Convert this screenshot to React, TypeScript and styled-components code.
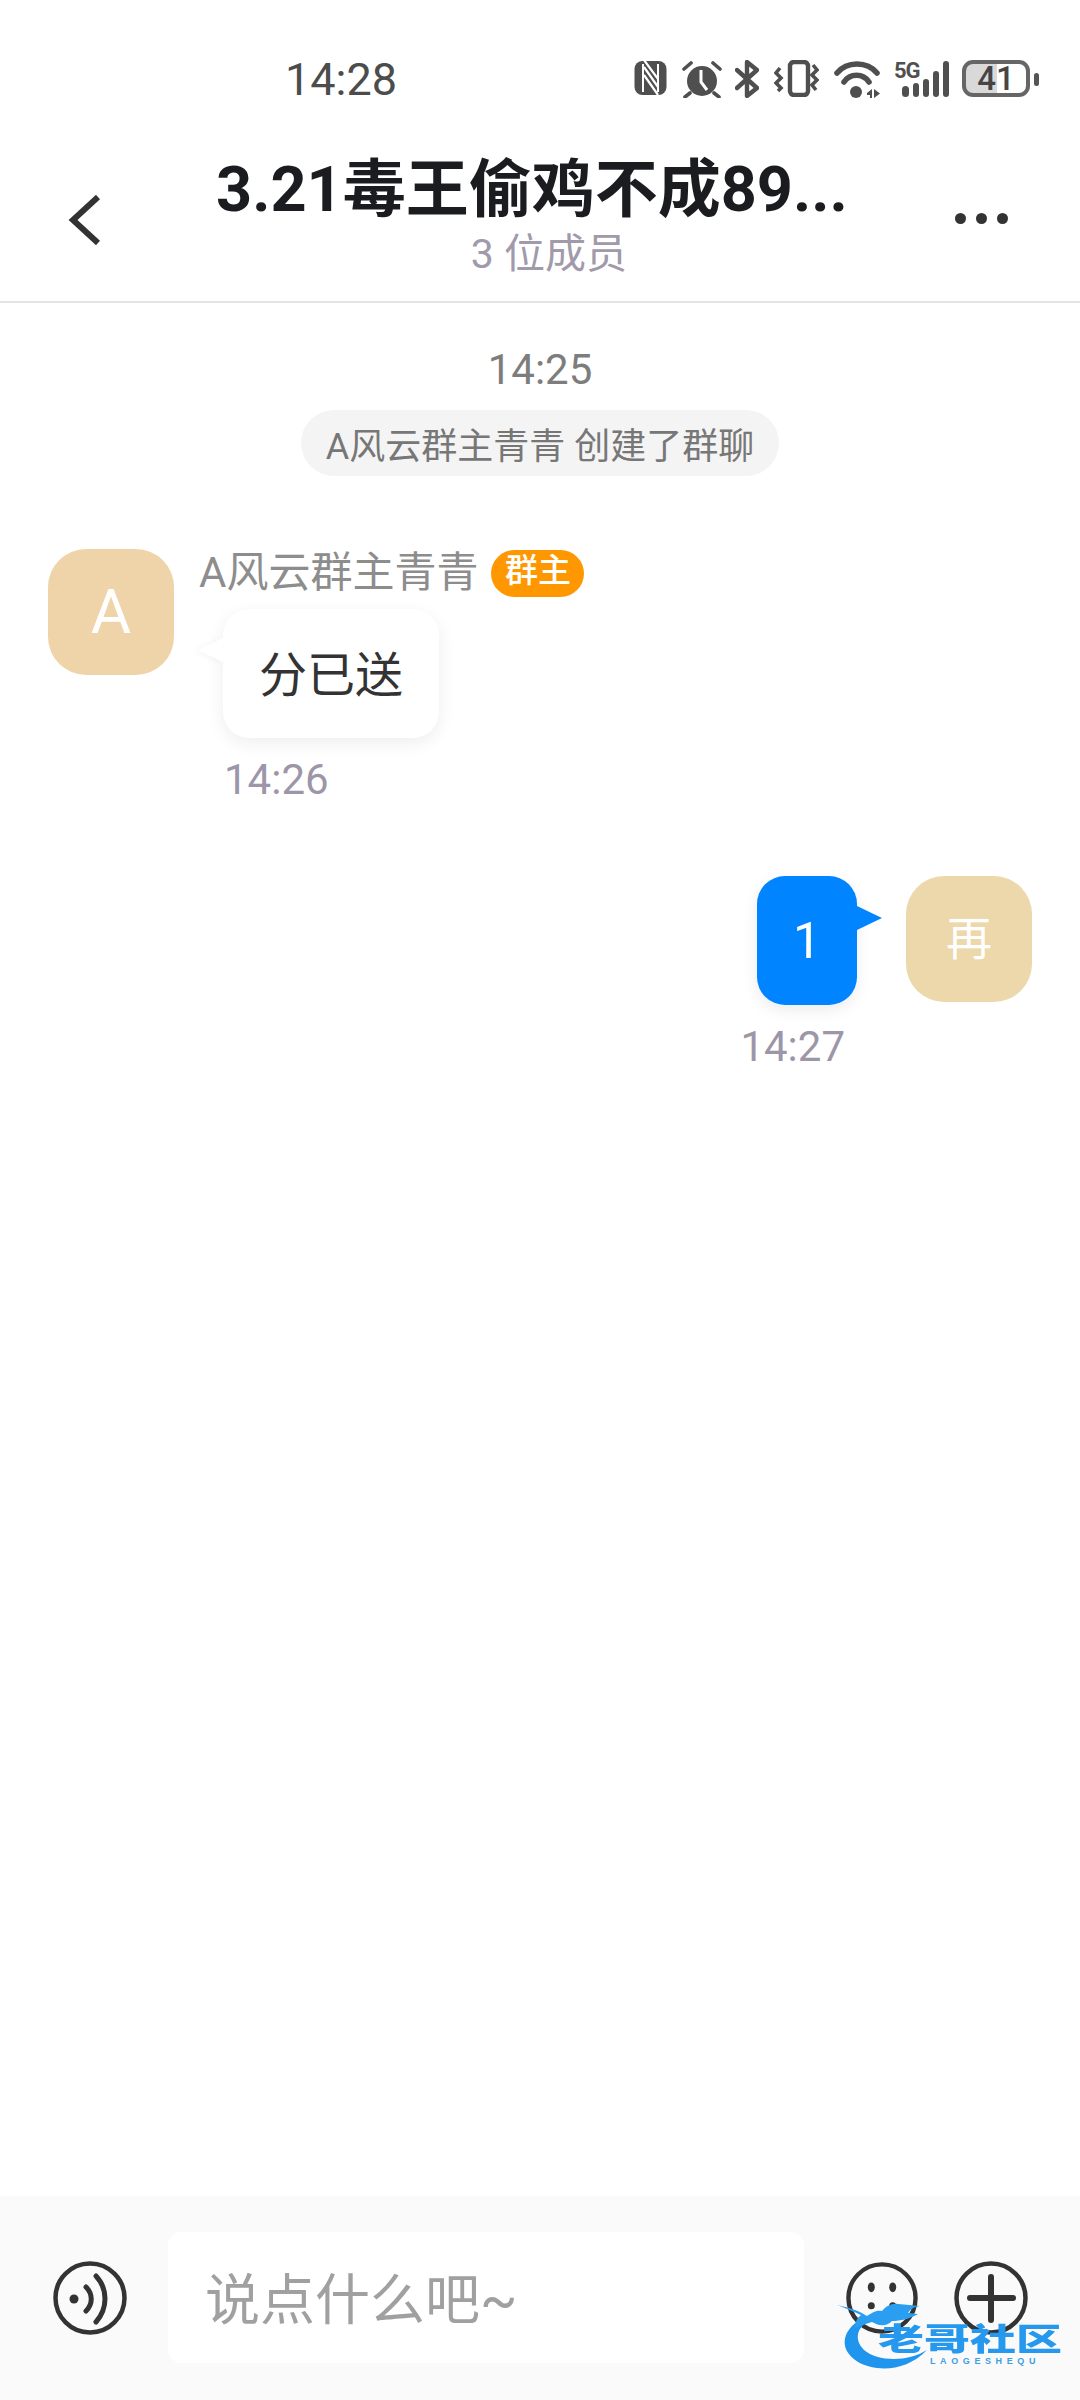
import React from "react";
import styled, { createGlobalStyle } from "styled-components";

const Global = createGlobalStyle`
  html, body { margin: 0; padding: 0; background: #fff; }
  * { box-sizing: border-box; }
  body { font-family: Roboto, "Noto Sans CJK SC", sans-serif; }
`;

const Page = styled.div`
  width: 1080px;
  height: 2400px;
  display: flex;
  flex-direction: column;
  background: #fff;
  overflow: hidden;
`;

const StatusBar = styled.div`
  height: 120px;
  padding: 56px 0 0 285px;
  display: flex;
  align-items: flex-start;
`;
const Clock = styled.div`
  width: 349px;
  font-family: Roboto, sans-serif;
  font-size: 45px;
  line-height: 48px;
  color: #4c4c4c;
`;
const StatusIcons = styled.div`
  display: flex;
  align-items: flex-start;
  height: 44px;
  padding-top: 4px;
  color: #505050;
`;
const Icon = styled.svg<{ $gap?: number }>`
  display: block;
  flex: none;
  margin-right: ${(p) => p.$gap ?? 0}px;
`;
const FiveG = styled.div`
  width: 27px;
  margin: 1px -27px 0 0;
  font-family: Roboto, sans-serif;
  font-weight: 700;
  font-size: 22px;
  line-height: 19px;
  letter-spacing: -1px;
  color: #505050;
`;
const Battery = styled.div`
  width: 68px;
  height: 37px;
  margin-left: 13px;
  border: 4px solid #666;
  border-radius: 11px;
  background: linear-gradient(90deg, #d9d9d9 0 31px, #fff 31px);
  display: flex;
  align-items: center;
  justify-content: center;
  font-family: Roboto, sans-serif;
  font-size: 33px;
  font-weight: 500;
  line-height: 29px;
  color: #454545;
`;
const BatteryNub = styled.div`
  width: 5px;
  height: 13px;
  margin: 13px 0 0 4px;
  border-radius: 2.5px;
  background: #555;
`;

const Header = styled.header`
  height: 183px;
  display: grid;
  grid-template-columns: 216px 1fr 216px;
  border-bottom: 2px solid #e3e3e3;
`;
const BackCell = styled.div`
  padding: 75px 0 0 68px;
`;
const TitleBlock = styled.div`
  display: flex;
  flex-direction: column;
  align-items: center;
  padding-top: 30px;
`;
const Title = styled.div`
  margin-right: 18px;
  font-size: 63px;
  font-weight: 700;
  line-height: 80px;
  color: #1b1c20;
  white-space: nowrap;
`;
const Members = styled.div`
  margin-left: 16px;
  font-size: 41px;
  line-height: 48px;
  color: #a09aaa;
  white-space: nowrap;
`;
const MoreCell = styled.div`
  display: flex;
  justify-content: flex-end;
  gap: 10px;
  padding: 93px 74px 0 0;
`;
const MoreDot = styled.span`
  width: 11px;
  height: 11px;
  border-radius: 50%;
  background: #333;
`;

const Chat = styled.main`
  flex: 1;
  display: flex;
  flex-direction: column;
`;
const SystemBlock = styled.div`
  display: flex;
  flex-direction: column;
  align-items: center;
  padding-top: 43px;
`;
const SystemTime = styled.div`
  font-size: 42px;
  line-height: 48px;
  color: #7d7d7d;
`;
const SystemPill = styled.div`
  margin-top: 16px;
  height: 66px;
  padding: 0 25px;
  border-radius: 33px;
  background: #f4f4f4;
  display: flex;
  align-items: center;
  font-size: 36px;
  color: #777;
  white-space: nowrap;
`;

const IncomingRow = styled.div`
  display: flex;
  padding: 73px 0 0 48px;
`;
const Avatar = styled.div<{ $bg: string; $size?: number }>`
  width: 126px;
  height: 126px;
  flex: none;
  border-radius: 38px;
  background: ${(p) => p.$bg};
  color: #fff;
  display: flex;
  align-items: center;
  justify-content: center;
  font-size: ${(p) => p.$size ?? 62}px;
  line-height: 1;
`;
const IncomingBody = styled.div`
  margin-left: 25px;
  display: flex;
  flex-direction: column;
  align-items: flex-start;
`;
const NameRow = styled.div`
  display: flex;
  align-items: center;
  height: 48px;
  gap: 13px;
`;
const Name = styled.div`
  font-size: 42px;
  line-height: 48px;
  color: #8d8d8d;
  white-space: nowrap;
`;
const OwnerBadge = styled.div`
  width: 93px;
  height: 47px;
  border-radius: 24px;
  background: #ff9800;
  color: #fff;
  font-size: 33px;
  font-weight: 500;
  line-height: 40px;
  padding-bottom: 5px;
  display: flex;
  align-items: center;
  justify-content: center;
`;
const LeftBubble = styled.div`
  position: relative;
  margin: 12px 0 0 24px;
  width: 216px;
  height: 129px;
  padding-bottom: 6px;
  border-radius: 26px;
  background: #fff;
  box-shadow: 0 5px 18px rgba(0, 0, 0, 0.07);
  display: flex;
  align-items: center;
  justify-content: center;
  font-size: 48px;
  color: #333;
  &::before {
    content: "";
    position: absolute;
    left: -25px;
    top: 29px;
    border-style: solid;
    border-width: 12px 25px 12px 0;
    border-color: transparent #fff transparent transparent;
    filter: drop-shadow(-3px 1px 3px rgba(0, 0, 0, 0.04));
  }
`;
const LeftTime = styled.div`
  margin: 18px 0 0 25px;
  font-size: 42px;
  line-height: 48px;
  color: #9d96a8;
`;

const OutgoingRow = styled.div`
  display: flex;
  justify-content: flex-end;
  align-items: flex-start;
  padding: 72px 48px 0 0;
`;
const OutgoingBody = styled.div`
  display: flex;
  flex-direction: column;
  align-items: flex-end;
  margin-right: 49px;
`;
const RightBubble = styled.div`
  position: relative;
  width: 100px;
  height: 129px;
  border-radius: 28px;
  background: #0084ff;
  box-shadow: 0 5px 16px rgba(0, 0, 0, 0.08);
  color: #fff;
  font-size: 50px;
  display: flex;
  align-items: center;
  justify-content: center;
  &::after {
    content: "";
    position: absolute;
    right: -25px;
    top: 30px;
    border-style: solid;
    border-width: 12px 0 12px 25px;
    border-color: transparent transparent transparent #0084ff;
  }
`;
const RightTime = styled.div`
  margin: 18px 12px 0 0;
  font-size: 42px;
  line-height: 48px;
  color: #9d96a8;
`;

const InputBar = styled.footer`
  position: relative;
  height: 204px;
  padding-top: 36px;
  background: #fafafa;
  display: flex;
  align-items: flex-start;
`;
const VoiceCell = styled.div`
  width: 168px;
  padding: 29px 0 0 53px;
`;
const TextBox = styled.div`
  width: 636px;
  height: 131px;
  border-radius: 14px;
  background: #fff;
  padding: 0 0 6px 37px;
  display: flex;
  align-items: center;
  font-size: 55px;
  color: #a0a0a0;
`;
const ActionCell = styled.div`
  display: flex;
  gap: 36px;
  padding: 29px 0 0 42px;
`;
const Watermark = styled.div`
  position: absolute;
  left: 836px;
  top: 104px;
  width: 228px;
  height: 72px;
`;
const WatermarkArt = styled.svg`
  display: block;
`;
const WatermarkName = styled.div`
  position: absolute;
  left: 42px;
  top: 9px;
  font-family: "Noto Sans CJK SC", sans-serif;
  font-weight: 900;
  font-size: 46px;
  line-height: 56px;
  white-space: nowrap;
  color: #2698ee;
  transform: scaleY(0.66);
`;
const WatermarkSub = styled.div`
  position: absolute;
  left: 94px;
  top: 56px;
  font-family: "Liberation Sans", sans-serif;
  font-weight: 700;
  font-size: 9px;
  line-height: 10px;
  letter-spacing: 4.6px;
  white-space: nowrap;
  color: #3d9fe6;
`;

const ink = "#4f4f4f";

export default function App() {
  return (
    <Page>
      <Global />
      <StatusBar>
        <Clock>14:28</Clock>
        <StatusIcons>
          <Icon width="33" height="35" viewBox="0 0 33 35" $gap={15}>
            <rect x="0.5" y="1" width="32" height="34" rx="8" fill={ink} />
            <path d="M9 4v28M24 4v28" stroke="#fff" strokeWidth="2" />
            <path d="M10 7l14 20M10 15l14 20M10 0l14 19" stroke="#fff" strokeWidth="2.2" />
          </Icon>
          <Icon width="40" height="38" viewBox="0 0 40 38" $gap={13}>
            <circle cx="20" cy="21" r="15" fill={ink} />
            <path d="M19 10v12l6 8" fill="none" stroke="#fff" strokeWidth="3" />
            <path d="M2 9l7-6M38 9l-7-6M8 33l-5 4M32 33l5 4" stroke={ink} strokeWidth="3.6" strokeLinecap="round" />
          </Icon>
          <Icon width="24" height="38" viewBox="0 0 24 38" $gap={15}>
            <path d="M2 10l20 18-10 8V2l10 8L2 28" fill="none" stroke={ink} strokeWidth="4.4" strokeLinejoin="round" strokeLinecap="round" />
          </Icon>
          <Icon width="45" height="37" viewBox="0 0 45 37" $gap={15}>
            <rect x="16" y="2" width="18" height="33" rx="4" fill="none" stroke={ink} strokeWidth="4.4" />
            <path d="M6 8L2 13l5 5-5 5 5 5-3 3M39 5l4 5-5 5 5 5-5 5 4 5" fill="none" stroke={ink} strokeWidth="3.6" />
          </Icon>
          <Icon width="47" height="38" viewBox="0 0 47 38" $gap={13}>
            <path d="M3 13C13 1 33 1 43 13" fill="none" stroke={ink} strokeWidth="5.6" strokeLinecap="round" />
            <path d="M10 22C16 13 29 13 35 22" fill="none" stroke={ink} strokeWidth="5.6" strokeLinecap="round" />
            <circle cx="22" cy="32" r="6" fill={ink} />
            <path d="M33 33l5-4v9h-2v-3h-3zM40 29l6 4.500-6 4.500z" fill={ink} />
          </Icon>
          <FiveG>5G</FiveG>
          <Icon width="55" height="37" viewBox="0 0 55 37">
            <rect x="8" y="26" width="7" height="11" rx="3.500" fill={ink} />
            <rect x="19" y="23" width="6" height="14" rx="3" fill={ink} />
            <rect x="29" y="19" width="6" height="18" rx="3" fill={ink} />
            <rect x="39" y="11" width="6" height="26" rx="3" fill={ink} />
            <rect x="49" y="1" width="6" height="36" rx="3" fill={ink} />
          </Icon>
          <Battery>41</Battery>
          <BatteryNub />
        </StatusIcons>
      </StatusBar>

      <Header>
        <BackCell>
          <Icon width="32" height="50" viewBox="0 0 32 50">
            <path d="M30 2L5 25l25 23" fill="none" stroke="#333" strokeWidth="6" strokeLinejoin="miter" />
          </Icon>
        </BackCell>
        <TitleBlock>
          <Title>3.21毒王偷鸡不成89...</Title>
          <Members>3 位成员</Members>
        </TitleBlock>
        <MoreCell>
          <MoreDot />
          <MoreDot />
          <MoreDot />
        </MoreCell>
      </Header>

      <Chat>
        <SystemBlock>
          <SystemTime>14:25</SystemTime>
          <SystemPill>A风云群主青青 创建了群聊</SystemPill>
        </SystemBlock>

        <IncomingRow>
          <Avatar $bg="#f0d4a9">A</Avatar>
          <IncomingBody>
            <NameRow>
              <Name>A风云群主青青</Name>
              <OwnerBadge>群主</OwnerBadge>
            </NameRow>
            <LeftBubble>分已送</LeftBubble>
            <LeftTime>14:26</LeftTime>
          </IncomingBody>
        </IncomingRow>

        <OutgoingRow>
          <OutgoingBody>
            <RightBubble>1</RightBubble>
            <RightTime>14:27</RightTime>
          </OutgoingBody>
          <Avatar $bg="#edd8ab" $size={46}>再</Avatar>
        </OutgoingRow>
      </Chat>

      <InputBar>
        <VoiceCell>
          <Icon width="74" height="74" viewBox="0 0 74 74">
            <circle cx="37" cy="37" r="34.5" fill="none" stroke="#333" strokeWidth="4.5" />
            <circle cx="21" cy="38" r="4.5" fill="#333" />
            <path d="M33 26c7 7 7 17 0 24" fill="none" stroke="#333" strokeWidth="5" strokeLinecap="round" />
            <path d="M43 15c12 13 12 32 0 46" fill="none" stroke="#333" strokeWidth="5" strokeLinecap="round" />
          </Icon>
        </VoiceCell>
        <TextBox>说点什么吧~</TextBox>
        <ActionCell>
          <Icon width="72" height="74" viewBox="0 0 74 74">
            <circle cx="37" cy="37" r="34.5" fill="none" stroke="#333" strokeWidth="4.5" />
            <ellipse cx="26" cy="26" rx="3.6" ry="5" fill="#333" />
            <ellipse cx="48" cy="26" rx="3.6" ry="5" fill="#333" />
            <ellipse cx="26" cy="45" rx="3.6" ry="3.6" fill="#333" />
            <ellipse cx="48" cy="45" rx="3.6" ry="3.6" fill="#333" />
          </Icon>
          <Icon width="74" height="74" viewBox="0 0 74 74">
            <circle cx="37" cy="37" r="34.5" fill="none" stroke="#333" strokeWidth="4.5" />
            <path d="M37 16v43M16 37h43" stroke="#333" strokeWidth="6" strokeLinecap="round" />
          </Icon>
        </ActionCell>
        <Watermark>
          <WatermarkArt width="228" height="72" viewBox="0 0 228 72">
            <path d="M26 19C8 28 0 48 22 62c18 10 48 10 69-12-19 12-49 12-63 0-10-10-8-22 6-30z" fill="#1f95ee" />
            <path d="M1 5c14 3 22 6 30 11 7-5 11-6 15-5 4-5 10-8 16-7 8 1 14 1 22 2-7 1-9 3-12 7 4 0 7 1 10 1-9 5-17 7-26 7-6 6-13 5-20 1-7 2-12 4-17 6 0-6 2-10 6-13C17 11 9 8 1 5z" fill="#2a9ef0" />
          </WatermarkArt>
          <WatermarkName>老哥社区</WatermarkName>
          <WatermarkSub>LAOGESHEQU</WatermarkSub>
        </Watermark>
      </InputBar>
    </Page>
  );
}
